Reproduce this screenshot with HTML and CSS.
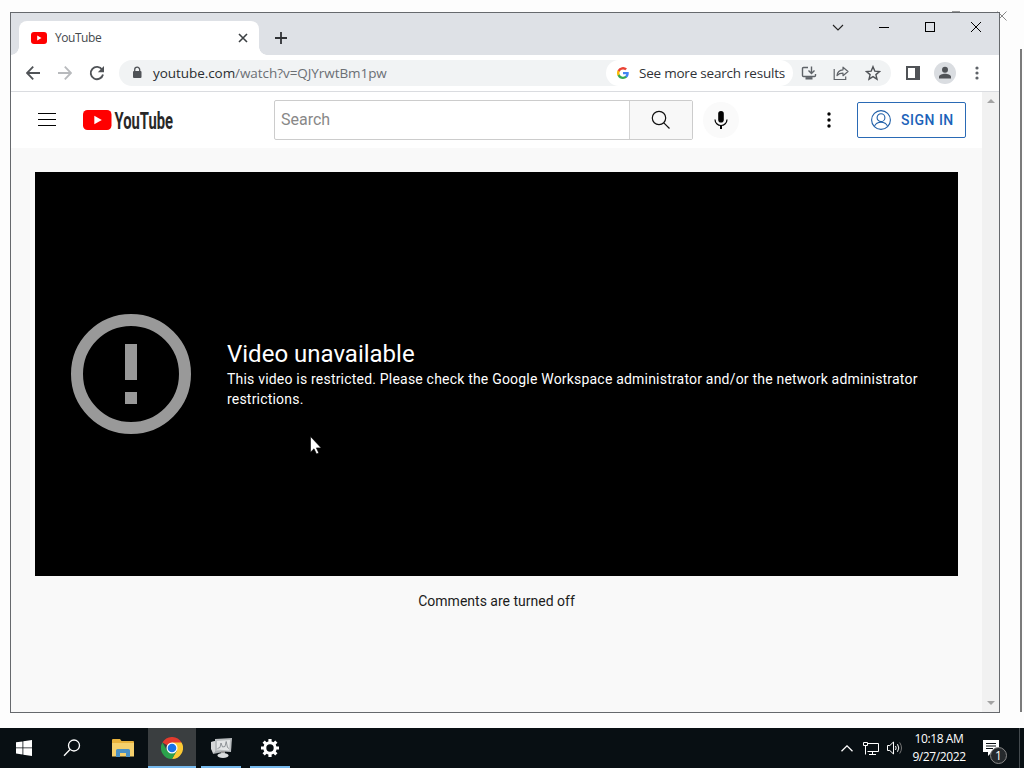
FILE: index.html
```html
<!DOCTYPE html>
<html lang="en">

<head>
    <meta charset="UTF-8">
    <meta name="viewport" content="width=device-width, initial-scale=1.0">
    <title>YouTube</title>
    <link rel="stylesheet" href="styles.css">
</head>

<body>
    <div class="desktop">
        <!-- window behind the browser -->
        <div class="back-window">
            <div class="back-dash"></div>
            <svg class="back-close" width="10" height="10" viewBox="0 0 10 10" fill="none" stroke="#888"><path d="M.5 .5l9 9M9.5 .5l-9 9" /></svg>
            <div class="back-edge"></div>
        </div>

        <div class="browser">
            <div class="tab-strip">
                <div class="tab">
                    <svg width="16" height="12" viewBox="0 0 16 12"><rect width="16" height="12" rx="3" fill="#f00" /><path d="M6.2 3.5v5l4.3-2.5z" fill="#fff" /></svg>
                    <span class="tab-title">YouTube</span>
                    <svg width="10" height="10" viewBox="0 0 10 10" stroke="#3c4043" stroke-width="1.6"><path d="M1 1l8 8M9 1l-8 8" /></svg>
                </div>
                <svg class="new-tab" width="12" height="12" viewBox="0 0 12 12" stroke="#303236" stroke-width="1.8"><path d="M6 0v12M0 6h12" /></svg>
                <div class="window-buttons">
                    <svg width="46" height="30" viewBox="0 0 46 30" fill="none" stroke="#222" stroke-width="1.1"><path d="M18 12l5 5 5-5" /></svg>
                    <svg width="46" height="30" viewBox="0 0 46 30" fill="none" stroke="#000"><path d="M18 14.5h10" /></svg>
                    <svg width="46" height="30" viewBox="0 0 46 30" fill="none" stroke="#000"><rect x="18.5" y="9.5" width="9" height="9" /></svg>
                    <svg width="46" height="30" viewBox="0 0 46 30" fill="none" stroke="#000"><path d="M18 9l10 10M28 9l-10 10" /></svg>
                </div>
            </div>

            <div class="toolbar">
                <div class="tool"><svg width="14" height="14" viewBox="0 0 14 14" fill="none" stroke="#505357" stroke-width="1.8"><path d="M14 7H1.5M7.2 .7L1 7l6.2 6.3" /></svg></div>
                <div class="tool"><svg width="14" height="14" viewBox="0 0 14 14" fill="none" stroke="#b8babd" stroke-width="1.8"><path d="M0 7h12.5M6.8 .7L13 7l-6.2 6.3" /></svg></div>
                <div class="tool"><svg width="16" height="16" viewBox="0 0 16 16"><path d="M13.2 4.7A6.2 6.2 0 1 0 14 9.5" fill="none" stroke="#505357" stroke-width="1.9" /><path d="M15 1v6.2H8.8z" fill="#505357" /></svg></div>
                <div class="omnibox">
                    <svg width="16" height="16" viewBox="0 0 16 16"><rect x="4" y="6" width="8.5" height="7" rx="1" fill="#505357" /><path d="M5.7 6.5V4.7a2.5 2.5 0 0 1 5 0v1.8" fill="none" stroke="#505357" stroke-width="1.3" /></svg>
                    <span class="url"><b>youtube.com</b>/watch?v=QJYrwtBm1pw</span>
                    <div class="search-chip">
                        <svg width="12" height="12" viewBox="0 0 24 24"><path fill="#4285f4" d="M23.5 12.3c0-.8-.1-1.6-.2-2.3H12v4.6h6.5a5.5 5.5 0 0 1-2.4 3.6v3h3.9c2.2-2.1 3.5-5.2 3.5-8.9z" /><path fill="#34a853" d="M12 24c3.2 0 6-1.1 8-2.9l-3.9-3a7.2 7.2 0 0 1-10.8-3.8h-4v3.1A12 12 0 0 0 12 24z" /><path fill="#fbbc05" d="M5.3 14.3a7.2 7.2 0 0 1 0-4.6V6.6h-4a12 12 0 0 0 0 10.8z" /><path fill="#ea4335" d="M12 4.8c1.8 0 3.4.6 4.6 1.8l3.4-3.4A12 12 0 0 0 1.3 6.6l4 3.1A7.1 7.1 0 0 1 12 4.8z" /></svg>
                        <span>See more search results</span>
                    </div>
                    <div class="tool"><svg width="16" height="16" viewBox="0 0 16 16" fill="none" stroke="#5f6368" stroke-width="1.4"><path d="M7 2.5H2.5Q1.5 2.5 1.5 3.5V10.5q0 1 1 1h11q1 0 1-1V9" /><path d="M4.5 13.3h7" stroke-width="2.4" /><path d="M10.5 1.5V8M7.5 5.5l3 3 3-3" /></svg></div>
                    <div class="tool"><svg width="16" height="16" viewBox="0 0 16 16" fill="none" stroke="#5f6368" stroke-width="1.2"><path d="M1.2 4v10.5h11.5v-3" /><path d="M4 10.5c.4-3.6 2.2-5.5 6-5.7V2.2l5 4.3-5 4.2V8.2C7.3 8.2 5.5 8.9 4 10.5z" stroke-linejoin="round" /></svg></div>
                    <div class="tool"><svg width="16" height="16" viewBox="0 0 16 16" fill="none" stroke="#505357" stroke-width="1.4"><path d="M8 1.7l1.8 4.4 4.7.4-3.6 3.1 1.1 4.6L8 11.7l-4 2.5 1.1-4.6-3.6-3.1 4.7-.4z" /></svg></div>
                </div>
                <div class="tool"><svg width="14" height="14" viewBox="0 0 14 14"><path d="M0 0h14v14H0zM2 2v10h7V2z" fill="#505357" fill-rule="evenodd" /></svg></div>
                <div class="tool"><svg width="22" height="22" viewBox="0 0 22 22"><circle cx="11" cy="11" r="11" fill="#dadde1" /><circle cx="11" cy="7.7" r="3" fill="#505357" /><path d="M5 16.5v-1.7c0-2 3.5-3 6-3s6 1 6 3v1.7z" fill="#505357" /></svg></div>
                <div class="tool"><svg width="4" height="14" viewBox="0 0 4 14" fill="#5f6368"><circle cx="2" cy="2" r="1.6" /><circle cx="2" cy="7" r="1.6" /><circle cx="2" cy="12" r="1.6" /></svg></div>
            </div>

            <div class="viewport">
                <div class="page">
                    <header class="masthead">
                        <svg class="menu" width="18" height="13" viewBox="0 0 18 13" stroke="#030303"><path d="M0 .5h18M0 6.5h18M0 12.5h18" /></svg>
                        <svg class="logo" width="130" height="40" viewBox="0 0 130 40">
                            <rect x="0" y="10" width="28.5" height="20" rx="4.5" fill="#f00" />
                            <path d="M11.3 15.7v8.6l7.5-4.3z" fill="#fff" />
                            <text x="31.5" y="29" textLength="58.500" lengthAdjust="spacingAndGlyphs" class="logo-text">YouTube</text>
                        </svg>
                        <div class="search">
                            <div class="search-input">Search</div>
                            <div class="search-button">
                                <svg width="20" height="20" viewBox="0 0 20 20" fill="none" stroke="#111" stroke-width="1.2"><circle cx="8" cy="8" r="6.7" /><path d="M12.8 12.8l5.7 5.7" /></svg>
                            </div>
                        </div>
                        <div class="mic">
                            <svg width="14" height="20" viewBox="0 0 14 20"><rect x="4.2" y="1" width="5.6" height="11.5" rx="2.8" fill="#030303" /><path d="M1 9.5a6 6 0 0 0 12 0" fill="none" stroke="#030303" stroke-width="1.2" /><path d="M7 15.5V19" stroke="#030303" stroke-width="2" /></svg>
                        </div>
                        <svg class="more" width="4" height="16" viewBox="0 0 4 16" fill="#030303"><circle cx="2" cy="2" r="1.7" /><circle cx="2" cy="8" r="1.7" /><circle cx="2" cy="14" r="1.7" /></svg>
                        <div class="sign-in">
                            <svg width="20" height="20" viewBox="0 0 20 20" fill="none" stroke="#1f5fa8" stroke-width="1.1"><circle cx="10" cy="10" r="9.4" /><circle cx="10" cy="7.7" r="3.9" /><path d="M3.4 16.4c1.3-3 3.8-4.1 6.6-4.1s5.3 1.1 6.6 4.1" /></svg>
                            <span>SIGN IN</span>
                        </div>
                    </header>

                    <div class="player">
                        <svg width="120" height="120" viewBox="0 0 120 120"><circle cx="60" cy="60" r="54" fill="none" stroke="#999" stroke-width="12" /><path d="M54 30h12v36H54zM54 78h12v12H54z" fill="#999" /></svg>
                        <div class="error">
                            <div class="error-title">Video unavailable</div>
                            <div class="error-text">This video is restricted. Please check the Google Workspace administrator and/or the network administrator restrictions.</div>
                        </div>
                    </div>
                    <div class="comments">Comments are turned off</div>
                </div>
                <div class="scrollbar">
                    <svg width="8" height="5" viewBox="0 0 8 5" fill="#a3a3a3"><path d="M0 5l4-4 4 4z" /></svg>
                    <svg width="8" height="5" viewBox="0 0 8 5" fill="#a3a3a3"><path d="M0 0l4 4 4-4z" /></svg>
                </div>
            </div>
        </div>

        <svg class="cursor" width="12" height="19" viewBox="0 0 12 19"><path d="M.5 .5v15.7l3.5-3.4 2.5 5.2 2.3-1-2.4-5.1h4.800z" fill="#fff" stroke="#000" stroke-width=".6" /></svg>

        <div class="taskbar">
            <div class="task start"><svg width="16" height="16" viewBox="0 0 16 16" fill="#fff"><path d="M0 2.3l6.5-.9v6.1H0zM7.3 1.3L16 0v7.5H7.3zM0 8.3h6.5v6.2L0 13.6zM7.3 8.3H16V16l-8.7-1.2z" /></svg></div>
            <div class="task find"><svg width="18" height="18" viewBox="0 0 18 18" fill="none" stroke="#fff" stroke-width="1.3"><circle cx="11" cy="6.5" r="5.5" /><path d="M7 10.5L1 16.7" /></svg></div>
            <div class="task">
                <svg width="22" height="20" viewBox="0 0 22 20"><path d="M0 2q0-1 1-1h7l1.5 2H21q1 0 1 1v14H0z" fill="#e8b23c" /><path d="M0 5h22v13.5H0z" fill="#f5d06c" /><path d="M4 19v-6.5q0-1.5 1.5-1.5h11q1.5 0 1.5 1.5V19h-4v-4H8v4z" fill="#4a90c4" /></svg>
            </div>
            <div class="task active">
                <svg width="22" height="22" viewBox="0 0 22 22">
                    <path d="M11 11L1.47 5.5A11 11 0 0 1 20.53 5.5z" fill="#e33b2e" />
                    <path d="M20.53 5.5A11 11 0 0 1 11 22l4.76-8.25L11 5.5z" fill="#fcc934" />
                    <path d="M11 22A11 11 0 0 1 1.47 5.5l4.77 8.25L11 16.5l4.76-2.75z" fill="#2ba24c" />
                    <circle cx="11" cy="11" r="5.5" fill="#fff" /><circle cx="11" cy="11" r="4.3" fill="#1a73e8" />
                </svg>
            </div>
            <div class="task open">
                <svg width="24" height="22" viewBox="0 0 24 22"><path d="M2 5l12-2v12L4 17z" fill="#a9adb0" /><path d="M2 5v7l2 4 2-1V4z" fill="#d5d7d8" /><path d="M6 2l17-1-1 14-16-1z" fill="#b9bdbf" /><path d="M8 4l13-1-.8 10.5L8 12.5z" fill="#e3e5e6" /><path d="M8.500 11.500l2.500-1 1-4.500 1.500 4 2.500-.5 1.200-5 1.300 6 1.500 1" fill="none" stroke="#7c8286" stroke-width=".8" /><path d="M12 14h4v3h-4z" fill="#999" /><ellipse cx="14" cy="18.5" rx="5.5" ry="2.5" fill="#d9dcdd" /></svg>
            </div>
            <div class="task open">
                <svg width="20" height="20" viewBox="0 0 20 20"><circle cx="10" cy="10" r="5.2" fill="none" stroke="#fff" stroke-width="3" /><path d="M10 1v4M10 15v4M1 10h4M15 10h4M3.64 3.64l2.8 2.8M13.56 13.56l2.8 2.8M16.36 3.64l-2.8 2.8M6.44 13.56l-2.8 2.8" stroke="#fff" stroke-width="3.2" /></svg>
            </div>
            <div class="tray">
                <svg width="12" height="7" viewBox="0 0 12 7" fill="none" stroke="#fff" stroke-width="1.3"><path d="M.5 6.3L6 .9l5.5 5.4" /></svg>
                <svg width="17" height="14" viewBox="0 0 17 14" fill="none" stroke="#fff"><path d="M6 2.5h10.5v8H5.5M10.5 10.5v3M7 13.5h7M1.5 1.5h4v3h-4zM3.5 4.5v9" /></svg>
                <svg class="volume" width="16" height="14" viewBox="0 0 16 14" fill="none" stroke="#fff"><path d="M.5 4.5h2.3l3.7-3.5v12L2.8 9.5H.5z" /><path d="M8.5 5q1.3 2 0 4M10.5 3.2q2.6 3.8 0 7.6" /><path d="M12.7 1.5q3.6 5.5 0 11" stroke="#777" /></svg>
                <div class="clock">
                    <div>10:18 AM</div>
                    <div>9/27/2022</div>
                </div>
                <div class="notice">
                    <svg width="16" height="16" viewBox="0 0 16 16"><path d="M0 0h16v12H9l-4 4v-4H0z" fill="#fff" /><path d="M3 3.5h10M3 6h10M3 8.5h7" stroke="#0a1014" /></svg>
                    <span class="badge">1</span>
                </div>
            </div>
        </div>
    </div>
</body>

</html>
```
FILE: styles.css
```css
* {
    box-sizing: border-box;
}

body {
    margin: 0;
    font-family: Roboto, Arial, sans-serif;
    background: #fdfdfd;
}

svg {
    display: block;
    flex-shrink: 0;
}

.desktop {
    position: relative;
    width: 1024px;
    height: 768px;
    overflow: hidden;
    display: flex;
    flex-direction: column;
    justify-content: flex-end;
}

.back-dash {
    position: absolute;
    left: 952px;
    top: 11px;
    width: 8px;
    height: 1px;
    background: #999;
}

.back-close {
    position: absolute;
    left: 997px;
    top: 11px;
}

.back-edge {
    position: absolute;
    left: 1020px;
    top: 49px;
    width: 2px;
    height: 663px;
    background: #7b7b7b;
}

.browser {
    position: absolute;
    left: 10px;
    top: 12px;
    width: 990px;
    height: 701px;
    border: 1px solid #66696d;
    background: #fff;
    display: flex;
    flex-direction: column;
}

.tab-strip {
    display: flex;
    height: 42px;
    background: #dee1e6;
    padding-left: 8px;
}

.tab {
    display: flex;
    align-items: center;
    width: 240px;
    height: 34px;
    margin-top: 8px;
    padding: 0 11px 0 12px;
    background: #fff;
    border-radius: 8px 8px 0 0;
    position: relative;
}

/* curved feet of the active tab */
.tab::before,
.tab::after {
    content: "";
    position: absolute;
    bottom: 0;
    width: 8px;
    height: 8px;
}

.tab::before {
    left: -8px;
    background: radial-gradient(circle at 0 0, transparent 7.5px, #fff 8px);
}

.tab::after {
    right: -8px;
    background: radial-gradient(circle at 100% 0, transparent 7.5px, #fff 8px);
}

.tab-title {
    flex: 1;
    margin-left: 8px;
    padding-bottom: 1px;
    font: 12px "Open Sans", sans-serif;
    letter-spacing: -0.45px;
    color: #45494d;
}

.new-tab {
    margin: 19px 0 0 16px;
}

.window-buttons {
    display: flex;
    margin-left: auto;
}

.toolbar {
    display: flex;
    align-items: center;
    height: 37px;
    padding: 0 6px;
    border-bottom: 1px solid #dadce0;
}

.tool {
    display: flex;
    align-items: center;
    justify-content: center;
    width: 32px;
}

.omnibox {
    display: flex;
    align-items: center;
    flex: 1;
    height: 26px;
    margin: 0 6px;
    padding: 0 2px 0 10px;
    border-radius: 13px;
    background: #f1f3f4;
    font: 13.5px "Open Sans", sans-serif;
}

.url {
    flex: 1;
    margin-left: 8px;
    padding-bottom: 1px;
    letter-spacing: -0.06px;
    color: #6b6f74;
}

.url b {
    font-weight: normal;
    color: #2b2e31;
}

.search-chip {
    display: flex;
    align-items: center;
    width: 187px;
    height: 26px;
    padding-left: 11px;
    border-radius: 13px;
    background: #fff;
    color: #303236;
    letter-spacing: -0.22px;
    white-space: nowrap;
}

.search-chip span {
    margin-left: 10px;
    padding-bottom: 1px;
}

.viewport {
    display: flex;
    flex: 1;
}

.page {
    flex: 1;
    background: #f9f9f9;
}

.scrollbar {
    display: flex;
    flex-direction: column;
    justify-content: space-between;
    align-items: center;
    width: 17px;
    padding: 6px 0;
    background: #f1f1f1;
}

.masthead {
    display: flex;
    align-items: center;
    height: 56px;
    padding: 0 16px 0 27px;
    background: #fff;
}

.menu {
    margin-bottom: 1px;
}

.logo {
    margin-left: 27px;
}

.logo-text {
    font: bold 24px Roboto, sans-serif;
    fill: #282828;
}

.search {
    display: flex;
    width: 419px;
    height: 40px;
    margin-left: 61px;
    border: 1px solid #ccc;
    border-radius: 2px;
}

.search-input {
    flex: 1;
    padding-left: 6px;
    font-size: 16px;
    line-height: 37px;
    color: #888;
}

.search-button {
    display: flex;
    align-items: center;
    justify-content: center;
    width: 63px;
    border-left: 1px solid #d3d3d3;
    background: #f8f8f8;
}

.mic {
    display: flex;
    align-items: center;
    justify-content: center;
    width: 36px;
    height: 36px;
    margin-left: 10px;
    border-radius: 50%;
    background: #fafafa;
}

.more {
    margin-left: auto;
}

.sign-in {
    display: flex;
    align-items: center;
    width: 109px;
    height: 36px;
    margin-left: 26px;
    padding-left: 13px;
    border: 1px solid #2a6ab5;
    border-radius: 2px;
    color: #1c62b9;
    font-size: 14px;
    font-weight: 500;
    letter-spacing: 0.5px;
}

.sign-in span {
    margin-left: 10px;
}

.player {
    display: flex;
    align-items: center;
    width: 923px;
    height: 404px;
    margin: 24px 24px 0;
    padding: 0 36px;
    background: #000;
    color: #fff;
}

.error {
    margin-left: 36px;
}

.error-title {
    font-size: 24px;
    line-height: 30px;
}

.error-text {
    width: 700px;
    font-size: 14px;
    line-height: 20px;
    letter-spacing: 0.2px;
}

.comments {
    margin-top: 15px;
    text-align: center;
    font-size: 14px;
    line-height: 20px;
    color: #1c1c1c;
}

.cursor {
    position: absolute;
    left: 310px;
    top: 436px;
}

.taskbar {
    display: flex;
    height: 40px;
    background: #080f13;
    color: #fff;
}

.task {
    display: flex;
    align-items: center;
    justify-content: center;
    width: 48px;
    height: 40px;
    margin-right: 1px;
}

.start {
    margin-right: 0;
}

.find {
    margin-right: 3px;
}

.active {
    background: linear-gradient(#3a3e40 38px, #76b9ed 38px);
}

.open {
    background: linear-gradient(#76b9ed, #76b9ed) 4px 38px / 40px 2px no-repeat;
}

.tray {
    display: flex;
    align-items: center;
    margin-left: auto;
    padding-right: 4px;
    border-right: 1px solid #444a4e;
    margin-right: 4px;
    gap: 9px;
}

.volume {
    margin-left: -1px;
}

.clock {
    width: 56px;
    margin-left: -1px;
    font: 12px/18px "Open Sans", sans-serif;
    letter-spacing: -0.4px;
    text-align: center;
    white-space: nowrap;
}

.notice {
    position: relative;
    margin: 0 16px 0 7px;
}

.badge {
    position: absolute;
    left: 7px;
    top: 7px;
    width: 17px;
    height: 17px;
    border: 1px solid #888;
    border-radius: 50%;
    background: #25292c;
    font: 12px/15px "Open Sans", sans-serif;
    text-align: center;
}
```
